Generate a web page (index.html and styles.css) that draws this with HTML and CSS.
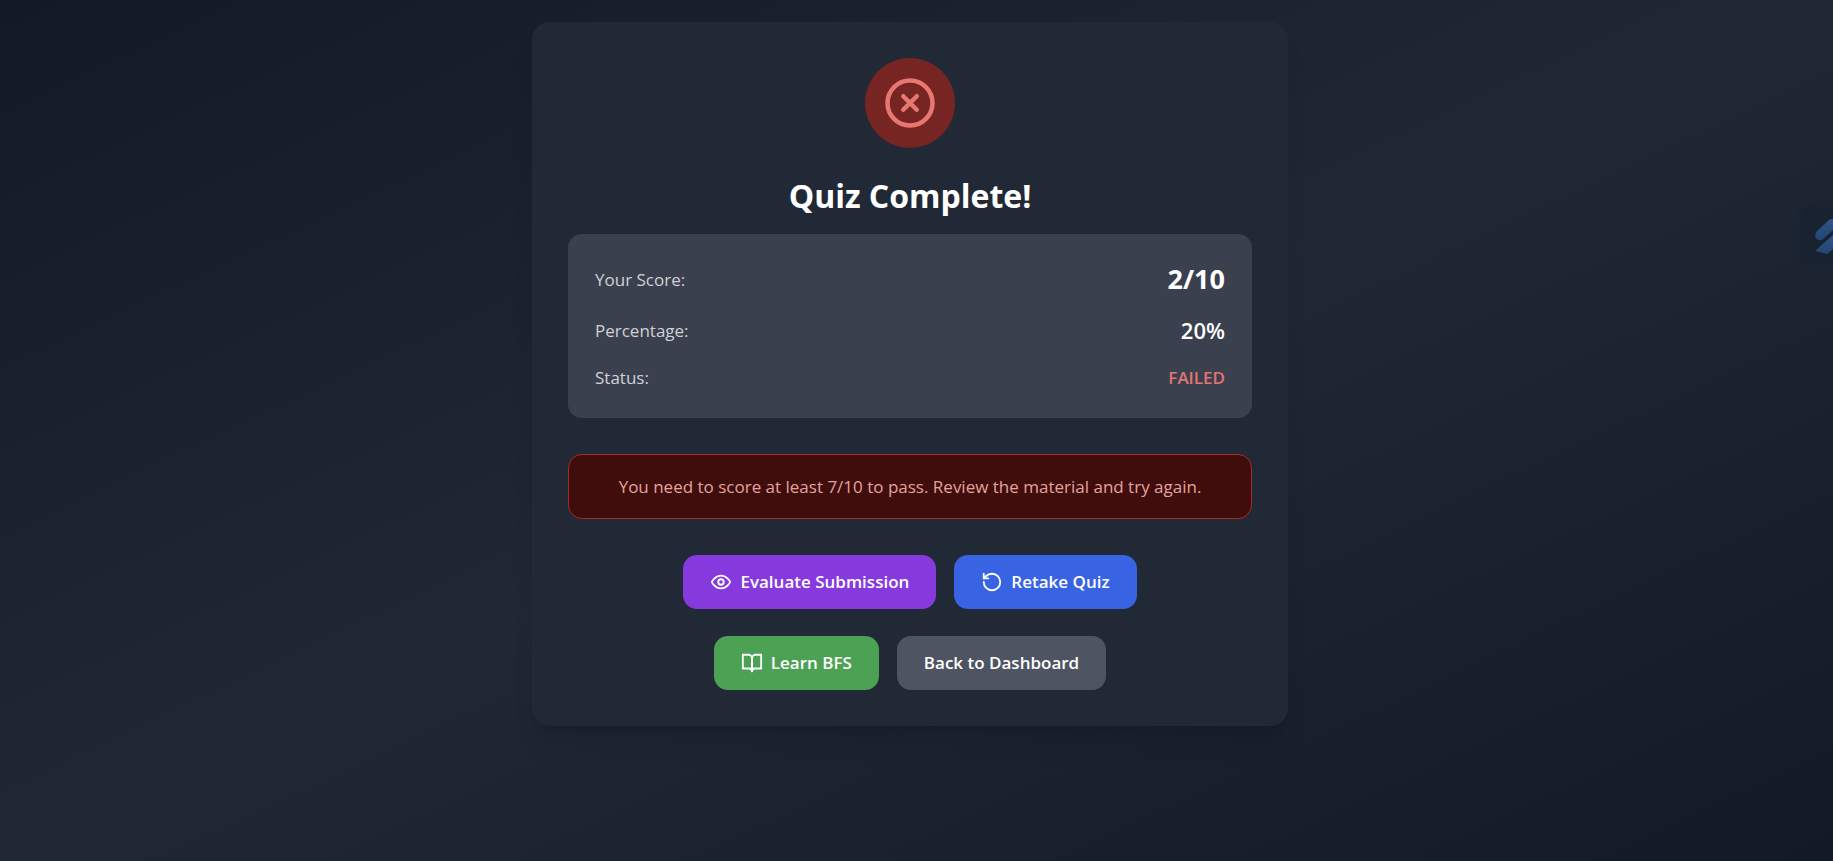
FILE: index.html
```html
<!DOCTYPE html>
<html lang="en">
<head>
<meta charset="utf-8">
<meta name="viewport" content="width=device-width, initial-scale=1">
<title>Quiz Complete</title>
<link rel="stylesheet" href="styles.css">
</head>
<body>
<main class="page">
  <section class="card">
    <div class="result-icon">
      <svg viewBox="0 0 24 24" aria-hidden="true"><circle cx="12" cy="12" r="10"/><path d="m15 9-6 6M9 9l6 6"/></svg>
    </div>
    <h1 class="title">Quiz Complete!</h1>
    <dl class="summary">
      <div class="row"><dt>Your Score:</dt><dd class="score">2/10</dd></div>
      <div class="row"><dt>Percentage:</dt><dd class="percent">20%</dd></div>
      <div class="row"><dt>Status:</dt><dd class="status">FAILED</dd></div>
    </dl>
    <p class="notice">You need to score at least 7/10 to pass. Review the material and try again.</p>
    <div class="actions">
      <div class="action-row">
        <button class="btn purple" type="button">
          <svg viewBox="0 0 24 24" aria-hidden="true"><path d="M2 12s3-7 10-7 10 7 10 7-3 7-10 7-10-7-10-7Z"/><circle cx="12" cy="12" r="3"/></svg>
          Evaluate Submission
        </button>
        <button class="btn blue" type="button">
          <svg viewBox="0 0 24 24" aria-hidden="true"><path d="M3 12a9 9 0 1 0 9-9 9.75 9.75 0 0 0-6.74 2.74L3 8"/><path d="M3 3v5h5"/></svg>
          Retake Quiz
        </button>
      </div>
      <div class="action-row">
        <button class="btn green" type="button">
          <svg viewBox="0 0 24 24" aria-hidden="true"><path d="M2 3h6a4 4 0 0 1 4 4v14a3 3 0 0 0-3-3H2z"/><path d="M22 3h-6a4 4 0 0 0-4 4v14a3 3 0 0 1 3-3h7z"/></svg>
          Learn BFS
        </button>
        <button class="btn gray" type="button">Back to Dashboard</button>
      </div>
    </div>
  </section>
</main>
<button class="side-tab" type="button" aria-label="Open assistant">
  <svg viewBox="0 0 32 54" aria-hidden="true">
    <defs><linearGradient id="tab-blue" x1="0" y1="0" x2="0" y2="1"><stop offset="0" stop-color="#2f5584"/><stop offset="1" stop-color="#234673"/></linearGradient></defs>
    <path fill="url(#tab-blue)" d="M32 11H29L16 23Q13 27 15 30Q17 33 21 32L32 22Z"/>
    <path fill="url(#tab-blue)" d="M32 27L14 43L26 46L32 41Z"/>
  </svg>
</button>
</body>
</html>
```
FILE: styles.css
```css
* { box-sizing: border-box; margin: 0; }

body {
  font-family: "Open Sans", "Noto Sans", sans-serif;
  font-size: 17px;
  line-height: 27px;
  color: #fff;
}

.page {
  min-height: 100vh;
  padding: 22px 31px 22px 18px;
  background: linear-gradient(to bottom right, #131926, #212835, #131926);
}

.card {
  max-width: 756px;
  margin: 0 auto;
  padding: 36px;
  border-radius: 18px;
  background: #222936;
  box-shadow: 0 20px 25px -5px rgba(0, 0, 0, 0.1), 0 8px 10px -6px rgba(0, 0, 0, 0.1);
  text-align: center;
}

.result-icon {
  display: flex;
  align-items: center;
  justify-content: center;
  width: 90px;
  height: 90px;
  margin: 0 auto 27px;
  border-radius: 50%;
  background: #772522;
}

svg {
  fill: none;
  stroke: currentColor;
  stroke-width: 2;
  stroke-linecap: round;
  stroke-linejoin: round;
}

.result-icon svg {
  width: 54px;
  height: 54px;
  color: #e87772;
}

.title {
  margin-bottom: 18px;
  font-size: 32px;
  font-weight: 700;
  line-height: 41px;
}

.summary {
  display: flex;
  flex-direction: column;
  gap: 18px;
  margin-bottom: 36px;
  padding: 27px;
  border-radius: 14px;
  background: #3b404f;
}

.row {
  display: flex;
  align-items: center;
  justify-content: space-between;
}

.row dt { color: #ced1d6; }
.score { font-size: 27px; font-weight: 700; line-height: 36px; }
.percent { font-size: 22px; font-weight: 600; line-height: 31px; }
.status { font-weight: 600; color: #e27572; }

.notice {
  margin-bottom: 36px;
  padding: 18px;
  border: 1px solid #a32c26;
  border-radius: 14px;
  background: #3f0e0c;
  color: #e5a29f;
}

.actions {
  display: flex;
  flex-direction: column;
  gap: 27px;
}

.action-row {
  display: flex;
  flex-wrap: wrap;
  justify-content: center;
  gap: 18px;
}

.btn {
  display: flex;
  align-items: center;
  gap: 8px;
  padding: 13px 27px 14px;
  border: 0;
  border-radius: 14px;
  color: #fff;
  font: inherit;
  font-weight: 600;
  cursor: pointer;
}

.btn svg { width: 22px; height: 22px; }

.purple { background: #8639dd; }
.blue { background: #3863e3; }
.green { background: #4da154; }
.gray { background: #4e5461; }

.side-tab {
  position: fixed;
  top: 208px;
  right: 0;
  width: 32px;
  height: 54px;
  padding: 0;
  border: 0;
  border-radius: 9px 0 0 9px;
  background: #192231;
  box-shadow: 0 0 5px #192231;
}

.side-tab svg {
  display: block;
  width: 32px;
  height: 54px;
  stroke: none;
}
```
